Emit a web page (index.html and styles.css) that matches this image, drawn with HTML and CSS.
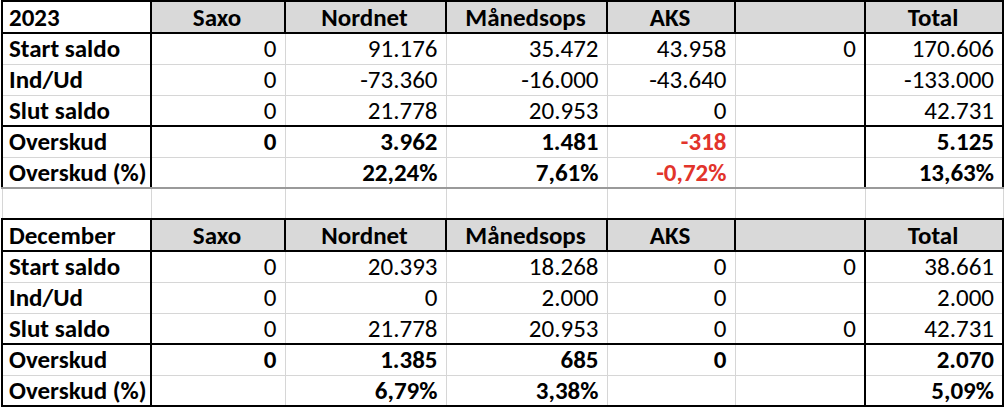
FILE: index.html
```html
<!DOCTYPE html>
<html lang="da">
<head>
<meta charset="utf-8">
<title>Overskud</title>
<link rel="stylesheet" href="styles.css">
</head>
<body>
<div class="sheet">
<table class="grid">
  <colgroup>
    <col class="c-label"><col class="c-saxo"><col class="c-nord"><col class="c-maan"><col class="c-aks"><col class="c-blank"><col class="c-total">
  </colgroup>
  <tbody>
    <tr class="head">
      <td class="lbl">2023</td><td>Saxo</td><td>Nordnet</td><td>Månedsops</td><td>AKS</td><td></td><td>Total</td>
    </tr>
    <tr class="row">
      <td class="lbl">Start saldo</td><td>0</td><td>91.176</td><td>35.472</td><td>43.958</td><td>0</td><td>170.606</td>
    </tr>
    <tr class="row">
      <td class="lbl">Ind/Ud</td><td>0</td><td>-73.360</td><td>-16.000</td><td>-43.640</td><td></td><td>-133.000</td>
    </tr>
    <tr class="row">
      <td class="lbl">Slut saldo</td><td>0</td><td>21.778</td><td>20.953</td><td>0</td><td></td><td>42.731</td>
    </tr>
    <tr class="row sum">
      <td class="lbl">Overskud</td><td>0</td><td>3.962</td><td>1.481</td><td class="neg">-318</td><td></td><td>5.125</td>
    </tr>
    <tr class="row sum last">
      <td class="lbl">Overskud (%)</td><td></td><td>22,24%</td><td>7,61%</td><td class="neg">-0,72%</td><td></td><td>13,63%</td>
    </tr>
    <tr class="gap">
      <td></td><td></td><td></td><td></td><td></td><td></td><td></td>
    </tr>
    <tr class="head">
      <td class="lbl">December</td><td>Saxo</td><td>Nordnet</td><td>Månedsops</td><td>AKS</td><td></td><td>Total</td>
    </tr>
    <tr class="row">
      <td class="lbl">Start saldo</td><td>0</td><td>20.393</td><td>18.268</td><td>0</td><td>0</td><td>38.661</td>
    </tr>
    <tr class="row">
      <td class="lbl">Ind/Ud</td><td>0</td><td>0</td><td>2.000</td><td>0</td><td></td><td>2.000</td>
    </tr>
    <tr class="row">
      <td class="lbl">Slut saldo</td><td>0</td><td>21.778</td><td>20.953</td><td>0</td><td>0</td><td>42.731</td>
    </tr>
    <tr class="row sum">
      <td class="lbl">Overskud</td><td>0</td><td>1.385</td><td>685</td><td>0</td><td></td><td>2.070</td>
    </tr>
    <tr class="row sum end">
      <td class="lbl">Overskud (%)</td><td></td><td>6,79%</td><td>3,38%</td><td></td><td></td><td>5,09%</td>
    </tr>
  </tbody>
</table>
</div>
</body>
</html>
```
FILE: styles.css
```css
html, body {
  margin: 0;
  padding: 0;
  background: #ffffff;
}

.sheet {
  padding: 0 0 0 1px;
  width: 1004px;
  height: 410px;
  overflow: hidden;
  box-sizing: border-box;
}

.grid {
  border-collapse: collapse;
  table-layout: fixed;
  width: 1001px;
  font-family: Carlito, Lato, "Liberation Sans", sans-serif;
  font-size: 25px;
  color: #000;
}

.c-label { width: 149px; }
.c-saxo { width: 134px; }
.c-nord { width: 161px; }
.c-maan { width: 161px; }
.c-aks { width: 128px; }
.c-blank { width: 130px; }
.c-total { width: 138px; }

.grid td {
  height: 31px;
  padding: 0 8px 0 6px;
  box-sizing: border-box;
  text-align: right;
  vertical-align: middle;
  white-space: nowrap;
  border: 1px solid #d6d6d6;
  line-height: 1;
}

.grid .lbl {
  text-align: left;
  font-weight: 700;
}

/* header rows */
.head td {
  height: 32px;
  background: #d9d9d9;
  font-weight: 700;
  text-align: center;
  border: 2px solid #000;
}

.head td.lbl {
  background: #ffffff;
  text-align: left;
}

/* data rows */
.row td:first-child {
  border-left: 2px solid #000;
  border-right: 2px solid #000;
}

.row td:nth-child(7) {
  border-left: 2px solid #000;
  border-right: 2px solid #000;
}

.sum td {
  font-weight: 700;
}

.row.sum:not(.last):not(.end) td {
  border-top: 2px solid #000;
}

.last td {
  border-bottom: 2px solid #9a9a9a;
}

.end td {
  border-bottom: 2px solid #000;
}

.neg {
  color: #e2342b;
}

.gap td {
  border-left: 1px solid #d6d6d6;
  border-right: 1px solid #d6d6d6;
}
```
